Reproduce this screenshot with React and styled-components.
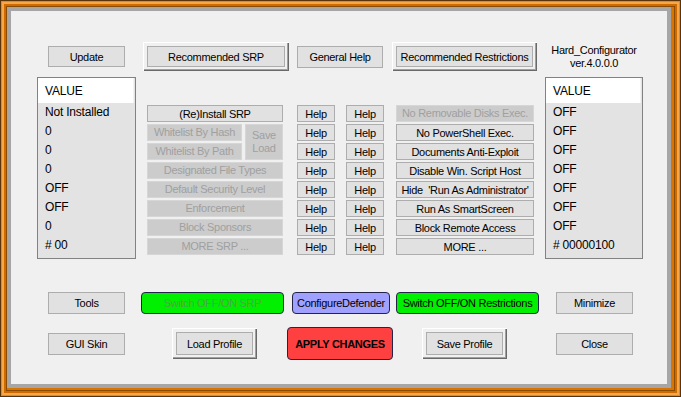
import React from "react";
import styled, { createGlobalStyle, css } from "styled-components";

const GlobalStyle = createGlobalStyle`
  html, body {
    margin: 0;
    padding: 0;
    background: #f0f0f0;
  }
  body {
    font-family: "Liberation Sans", Arial, sans-serif;
    font-size: 11px;
    letter-spacing: -0.3px;
    color: #000000;
  }
`;

const Frame = styled.div`
  width: 681px;
  height: 397px;
  box-sizing: border-box;
  padding: 7px 10px 9px 7px;
  background: #d87400;
  box-shadow: inset 0 0 0 1px #5a3408, inset 0 0 0 2px #e98a10,
    inset 0 0 0 4px #f4a84a, inset 0 0 0 6px #d06a00,
    inset 0 0 0 7px #8a4a00;
`;

const Panel = styled.div`
  height: 100%;
  box-sizing: border-box;
  border: 4px solid #a6a6a6;
  background: #f0f0f0;
  padding-left: 26px;
  display: flex;
  flex-direction: column;
`;

const Row = styled.div`
  display: flex;
  align-items: ${(p) => p.$align || "center"};
  height: ${(p) => (p.$h ? `${p.$h}px` : "auto")};
  margin-top: ${(p) => p.$mt}px;
`;

const base = css`
  box-sizing: border-box;
  font: inherit;
  letter-spacing: inherit;
  padding: 0;
  margin: 0 0 0 ${(p) => p.$ml || 0}px;
  width: ${(p) => (p.$w ? `${p.$w}px` : "auto")};
  height: ${(p) => p.$h || 17}px;
  flex-shrink: 0;
  display: flex;
  align-items: center;
  justify-content: center;
  white-space: pre;
  color: #000000;
  cursor: default;
`;

const FlatButton = styled.button`
  ${base};
  background: #e1e1e1;
  border: 1px solid #adadad;
`;

const DimButton = styled.button`
  ${base};
  background: #cccccc;
  border: 1px solid #d6d6d6;
  color: #a0a0a0;
  line-height: 13px;
`;

const RaisedButton = styled.button`
  ${base};
  background: #e1e1e1;
  border: none;
  box-shadow: inset 1px 1px 0 #ffffff, inset -1px -1px 0 #696969,
    inset -2px -2px 0 #a0a0a0, inset 0 0 0 4px #f0f0f0,
    inset 0 0 0 5px #adadad;
`;

const ColorButton = styled.button`
  ${base};
  background: ${(p) => p.$bg};
  color: ${(p) => p.$fg || "#000000"};
  font-weight: ${(p) => (p.$bold ? 700 : 400)};
  border: 1px solid #24244a;
  border-radius: 4px;
`;

const Title = styled.div`
  width: 98px;
  margin-left: 8px;
  text-align: center;
  line-height: 13px;
`;

const List = styled.div`
  box-sizing: border-box;
  width: ${(p) => p.$w}px;
  height: 182px;
  margin-left: ${(p) => p.$ml || 0}px;
  border: 1px solid #828282;
  background: #e3e3e3;
  flex-shrink: 0;
  font-size: 12px;
  letter-spacing: -0.2px;
`;

const ListHeader = styled.div`
  height: 25px;
  background: #ffffff;
  margin-right: 2px;
  box-shadow: 1px 0 0 #f4f4f4;
  padding-left: 7px;
  display: flex;
  align-items: center;
`;

const ListRow = styled.div`
  height: 19px;
  line-height: 19px;
  padding-left: 7px;
`;

const Block = styled.div`
  display: flex;
  margin-left: 11px;
  margin-top: 28px;
`;

const SrpGrid = styled.div`
  display: grid;
  grid-template-columns: 95px 38px;
  grid-auto-rows: 17px;
  column-gap: 3px;
  row-gap: 2px;
  width: 136px;

  & > .wide {
    grid-column: 1 / -1;
  }
  & > .tall {
    grid-row: span 2;
    height: 36px;
  }
`;

const Column = styled.div`
  display: flex;
  flex-direction: column;
  gap: 2px;
  margin-left: ${(p) => p.$ml}px;
  width: ${(p) => p.$w}px;
`;

const leftValues = ["Not Installed", "0", "0", "0", "OFF", "OFF", "0", "# 00"];
const rightValues = ["OFF", "OFF", "OFF", "OFF", "OFF", "OFF", "OFF", "# 00000100"];

const restrictions = [
  { label: "No Removable Disks Exec.", dim: true },
  { label: "No PowerShell Exec." },
  { label: "Documents Anti-Exploit" },
  { label: "Disable Win. Script Host" },
  { label: "Hide  'Run As Administrator'" },
  { label: "Run As SmartScreen" },
  { label: "Block Remote Access" },
  { label: "MORE ..." },
];

const ValueList = ({ values, w, ml }) => (
  <List $w={w} $ml={ml}>
    <ListHeader>VALUE</ListHeader>
    {values.map((v, i) => (
      <ListRow key={i}>{v}</ListRow>
    ))}
  </List>
);

const HelpColumn = ({ ml }) => (
  <Column $ml={ml} $w={38}>
    {restrictions.map((_, i) => (
      <FlatButton key={i} $w={38} $h={17}>
        Help
      </FlatButton>
    ))}
  </Column>
);

export default function App() {
  return (
    <>
      <GlobalStyle />
      <Frame>
        <Panel>
          <Row $mt={31} $h={29}>
            <FlatButton $ml={11} $w={77} $h={21}>Update</FlatButton>
            <RaisedButton $ml={18} $w={146} $h={29}>Recommended SRP</RaisedButton>
            <FlatButton $ml={8} $w={86} $h={22}>General Help</FlatButton>
            <RaisedButton $ml={9} $w={145} $h={29}>Recommended Restrictions</RaisedButton>
            <Title>
              Hard_Configurator
              <br />
              ver.4.0.0.0
            </Title>
          </Row>

          <Row $mt={6} $align="flex-start">
            <ValueList values={leftValues} w={99} />
            <Block>
              <SrpGrid>
                <FlatButton className="wide" $h={17}>(Re)Install SRP</FlatButton>
                <DimButton $h={17}>Whitelist By Hash</DimButton>
                <DimButton className="tall">
                  Save
                  <br />
                  Load
                </DimButton>
                <DimButton $h={17}>Whitelist By Path</DimButton>
                <DimButton className="wide" $h={17}>Designated File Types</DimButton>
                <DimButton className="wide" $h={17}>Default Security Level</DimButton>
                <DimButton className="wide" $h={17}>Enforcement</DimButton>
                <DimButton className="wide" $h={17}>Block Sponsors</DimButton>
                <DimButton className="wide" $h={17}>MORE SRP ...</DimButton>
              </SrpGrid>
              <HelpColumn ml={14} />
              <HelpColumn ml={11} />
              <Column $ml={12} $w={138}>
                {restrictions.map((r) =>
                  r.dim ? (
                    <DimButton key={r.label} $w={138} $h={17}>{r.label}</DimButton>
                  ) : (
                    <FlatButton key={r.label} $w={138} $h={17}>{r.label}</FlatButton>
                  )
                )}
              </Column>
            </Block>
            <ValueList values={rightValues} w={98} ml={11} />
          </Row>

          <Row $mt={33} $h={22}>
            <FlatButton $ml={11} $w={77} $h={22}>Tools</FlatButton>
            <ColorButton $ml={16} $w={143} $h={22} $bg="#00f000" $fg="#48a848">
              Switch OFF/ON SRP
            </ColorButton>
            <ColorButton $ml={8} $w={98} $h={22} $bg="#a0a0ff">
              ConfigureDefender
            </ColorButton>
            <ColorButton $ml={6} $w={143} $h={22} $bg="#00f000">
              Switch OFF/ON Restrictions
            </ColorButton>
            <FlatButton $ml={17} $w={77} $h={22}>Minimize</FlatButton>
          </Row>

          <Row $mt={13} $h={33}>
            <FlatButton $ml={11} $w={77} $h={22}>GUI Skin</FlatButton>
            <RaisedButton $ml={47} $w={85} $h={31}>Load Profile</RaisedButton>
            <ColorButton $ml={30} $w={106} $h={33} $bg="#ff4040" $bold>
              APPLY CHANGES
            </ColorButton>
            <RaisedButton $ml={29} $w={85} $h={31}>Save Profile</RaisedButton>
            <FlatButton $ml={49} $w={77} $h={22}>Close</FlatButton>
          </Row>
        </Panel>
      </Frame>
    </>
  );
}
